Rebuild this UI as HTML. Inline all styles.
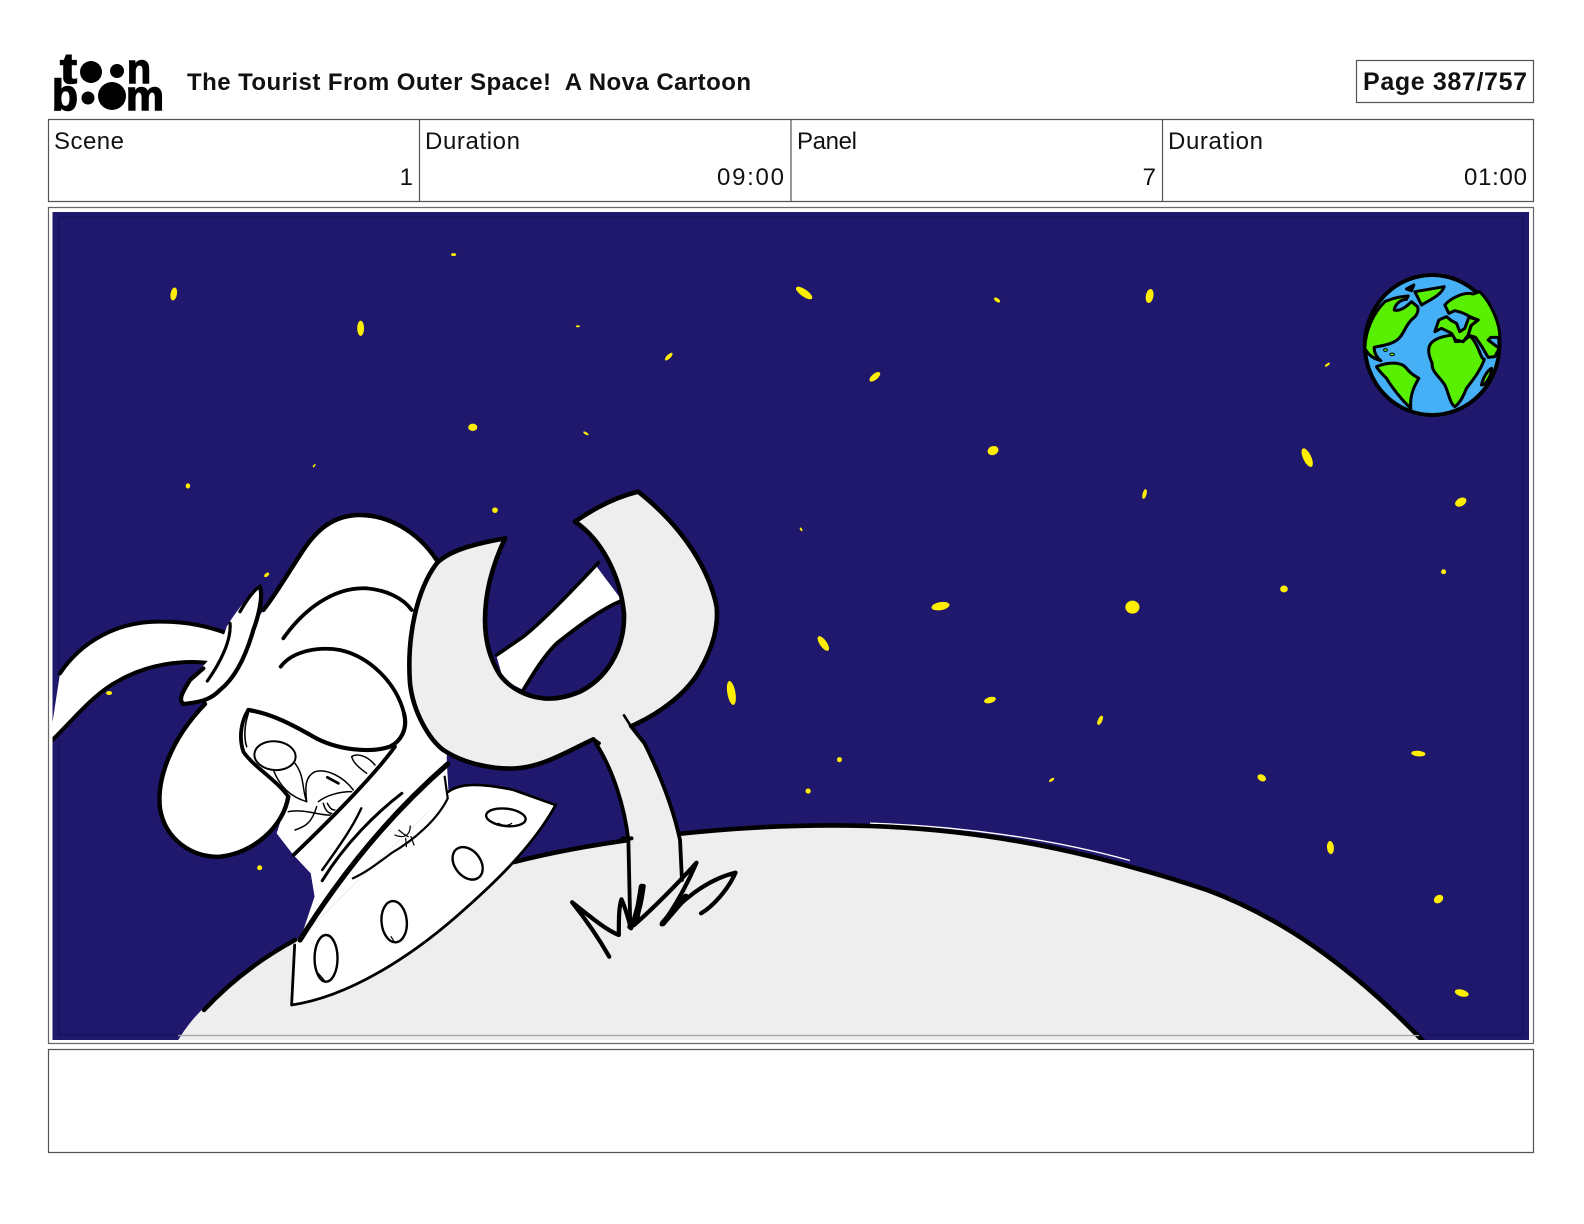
<!DOCTYPE html>
<html><head><meta charset="utf-8"><title>The Tourist From Outer Space! A Nova Cartoon</title>
<style>
html,body{margin:0;padding:0;background:#fff;width:1584px;height:1224px;overflow:hidden}
svg{display:block}
text{font-family:"Liberation Sans",sans-serif;fill:#111}
path,ellipse.s,rect,line{vector-effect:non-scaling-stroke}
.k{fill:none;stroke:#000;stroke-linecap:round;stroke-linejoin:round}
</style></head><body>
<svg width="1584" height="1224" viewBox="0 0 1584 1224" xmlns="http://www.w3.org/2000/svg">
<!-- logo -->
<g>
<text x="60" y="83" font-size="43" font-weight="700" stroke="#000" stroke-width="1.4" textLength="17" lengthAdjust="spacingAndGlyphs" style="fill:#000">t</text>
<circle cx="91" cy="72" r="11" fill="#000"/><circle cx="117" cy="71" r="7" fill="#000"/>
<text x="127" y="83" font-size="42" font-weight="700" stroke="#000" stroke-width="1.4" textLength="24" lengthAdjust="spacingAndGlyphs" style="fill:#000">n</text>
<text x="52" y="110" font-size="44" font-weight="700" stroke="#000" stroke-width="1.4" textLength="26" lengthAdjust="spacingAndGlyphs" style="fill:#000">b</text>
<circle cx="88" cy="98" r="6.5" fill="#000"/><circle cx="112" cy="96" r="14" fill="#000"/>
<text x="126" y="110" font-size="42" font-weight="700" stroke="#000" stroke-width="1.4" textLength="38" lengthAdjust="spacingAndGlyphs" style="fill:#000">m</text>
</g>
<text x="187" y="90" font-size="24" font-weight="700" textLength="564">The Tourist From Outer Space!&#160; A Nova Cartoon</text>
<rect x="1356.5" y="60.5" width="177" height="42" fill="none" stroke="#555" stroke-width="1.2"/>
<text x="1363" y="90" font-size="25" font-weight="700" textLength="164">Page 387/757</text>
<!-- table -->
<rect x="48.5" y="119.5" width="1485" height="82" fill="none" stroke="#555" stroke-width="1.2"/>
<line x1="419.5" y1="119.5" x2="419.5" y2="201.5" stroke="#555" stroke-width="1.2"/>
<line x1="791" y1="119.5" x2="791" y2="201.5" stroke="#555" stroke-width="1.2"/>
<line x1="1162.5" y1="119.5" x2="1162.5" y2="201.5" stroke="#555" stroke-width="1.2"/>
<g font-size="24">
<text x="54" y="149" textLength="70">Scene</text>
<text x="425" y="149" textLength="95">Duration</text>
<text x="797" y="149" textLength="60">Panel</text>
<text x="1168" y="149" textLength="95">Duration</text>
<text x="413" y="185" text-anchor="end">1</text>
<text x="717" y="185" textLength="67">09:00</text>
<text x="1156" y="185" text-anchor="end">7</text>
<text x="1464" y="185" textLength="63">01:00</text>
</g>
<!-- frame -->
<rect x="48.5" y="207.5" width="1485" height="836" fill="none" stroke="#666" stroke-width="1.2"/>
<rect x="48.5" y="1049.5" width="1485" height="103" fill="none" stroke="#555" stroke-width="1.2"/>
<svg x="52.5" y="212" width="1476.5" height="828" viewBox="52.5 212 1476.5 828">
<rect x="52.5" y="212" width="1476.5" height="828" fill="#1f186d"/>
<rect x="59" y="217" width="1464" height="818" fill="none" stroke="#19135a" stroke-width="1.5"/>
<!-- stars -->
<g transform="scale(1.0102)" fill="#ffee00">
<ellipse cx="172" cy="291" rx="3.2" ry="6.5" transform="rotate(10 172 291)"/>
<ellipse cx="357" cy="325" rx="3.4" ry="7.5"/>
<ellipse cx="449" cy="252" rx="2.5" ry="1.4"/>
<ellipse cx="796" cy="290" rx="9.5" ry="3.6" transform="rotate(35 796 290)"/>
<ellipse cx="987" cy="297" rx="3.5" ry="1.8" transform="rotate(35 987 297)"/>
<ellipse cx="1138" cy="293" rx="3.8" ry="7" transform="rotate(10 1138 293)"/>
<ellipse cx="572" cy="323" rx="2" ry="1"/>
<ellipse cx="662" cy="353" rx="5" ry="2" transform="rotate(-45 662 353)"/>
<ellipse cx="866" cy="373" rx="6.5" ry="3" transform="rotate(-40 866 373)"/>
<ellipse cx="468" cy="423" rx="4.5" ry="3.6"/>
<ellipse cx="580" cy="429" rx="3" ry="1.2" transform="rotate(30 580 429)"/>
<ellipse cx="983" cy="446" rx="5.5" ry="4.4" transform="rotate(-20 983 446)"/>
<ellipse cx="1294" cy="453" rx="4" ry="10" transform="rotate(-25 1294 453)"/>
<ellipse cx="1314" cy="361" rx="3" ry="1.2" transform="rotate(-35 1314 361)"/>
<ellipse cx="186" cy="481" rx="2.2" ry="2.6"/>
<ellipse cx="311" cy="461" rx="2" ry=".8" transform="rotate(-50 311 461)"/>
<ellipse cx="1133" cy="489" rx="2" ry="5" transform="rotate(15 1133 489)"/>
<ellipse cx="1446" cy="497" rx="6" ry="4" transform="rotate(-30 1446 497)"/>
<circle cx="490" cy="505" r="2.8"/>
<ellipse cx="793" cy="524" rx="2" ry="1" transform="rotate(60 793 524)"/>
<ellipse cx="264" cy="569" rx="3" ry="1.7" transform="rotate(-40 264 569)"/>
<ellipse cx="1271" cy="583" rx="3.8" ry="3.4"/>
<circle cx="1429" cy="566" r="2.5"/>
<ellipse cx="931" cy="600" rx="9" ry="4" transform="rotate(-10 931 600)"/>
<ellipse cx="1121" cy="601" rx="7" ry="6.4"/>
<ellipse cx="815" cy="637" rx="3.5" ry="8.5" transform="rotate(-35 815 637)"/>
<ellipse cx="724" cy="686" rx="4" ry="12" transform="rotate(-10 724 686)"/>
<ellipse cx="980" cy="693" rx="6" ry="3" transform="rotate(-15 980 693)"/>
<ellipse cx="1089" cy="713" rx="2.2" ry="5" transform="rotate(25 1089 713)"/>
<ellipse cx="1404" cy="746" rx="7" ry="2.8" transform="rotate(5 1404 746)"/>
<circle cx="831" cy="752" r="2.5"/>
<ellipse cx="1041" cy="772" rx="3" ry="1.4" transform="rotate(-35 1041 772)"/>
<ellipse cx="1249" cy="770" rx="4.5" ry="3.2" transform="rotate(30 1249 770)"/>
<circle cx="800" cy="783" r="2.6"/>
<ellipse cx="1317" cy="839" rx="3.4" ry="6.5" transform="rotate(-5 1317 839)"/>
<ellipse cx="1424" cy="890" rx="5" ry="3.8" transform="rotate(-35 1424 890)"/>
<ellipse cx="1447" cy="983" rx="7" ry="3.4" transform="rotate(15 1447 983)"/>
<circle cx="257" cy="859" r="2.5"/>
<ellipse cx="108" cy="686" rx="3" ry="2"/>
</g>
<!-- earth -->
<g transform="translate(1331.5 260) scale(.33333)">
<ellipse class="s" cx="302" cy="255" rx="202" ry="210" fill="#46b0f6" stroke="#000" stroke-width="4"/>
<g fill="#58f000" stroke="#000" stroke-width="3" stroke-linejoin="round">
<path d="M160,125C175,118 200,110 230,108L225,118C205,118 190,135 188,150C205,155 225,140 240,125L258,140C262,150 258,165 245,175C225,190 220,215 205,232C190,250 165,255 128,262C128,280 135,292 148,302C125,295 110,285 100,265C102,210 125,160 160,125Z"/>
<path d="M250,95L338,80C330,105 295,120 270,135Z"/>
<path d="M225,87L247,75L240,92Z"/>
<path d="M135,320C170,305 210,305 225,325C240,345 255,350 262,355C240,390 235,420 238,445C210,420 180,380 165,355C150,340 140,330 135,320Z"/>
<path d="M292,265C295,240 330,228 365,225L372,245L395,243L415,228C430,240 440,265 450,290C455,300 460,295 458,300C445,335 420,365 405,385C395,410 385,430 370,440C355,430 352,400 340,375C320,345 300,335 302,310C295,295 290,280 292,265Z"/>
<path d="M340,135C360,112 400,95 425,102L445,95C480,130 505,190 505,232L478,232L470,240L503,265L490,290L470,292L450,258L432,232L410,225L420,195L440,180L415,170C400,160 385,155 370,152L352,160Z"/>
<path d="M310,215L322,180L345,170L360,182L375,190L385,215L400,205L412,172L440,180L418,197L410,225L395,245L372,240L360,220L330,205Z"/>
<path d="M450,375C455,350 470,330 480,325C480,345 465,375 450,375Z"/>
<ellipse cx="162" cy="270" rx="6" ry="4"/><ellipse cx="182" cy="283" rx="7" ry="4"/>
</g>
</g>
<!-- planet -->
<path d="M177,1042C190,1020 204,1007 215,998C240,975 270,955 295,940L514,862C600,840 740,822 869,826C1000,830 1110,858 1207,890C1280,917 1350,965 1424,1042Z" fill="#eeeeee"/>
<path d="M870,823.2C960,826 1050,838.5 1130,860.5" fill="none" stroke="#fff" stroke-width="1.4"/>
<path class="k" d="M204,1010C230,982 262,958 295,940" stroke-width="4.4"/>
<path class="k" d="M514,862C600,840 740,822 869,826C1000,830 1110,858 1207,890C1280,917 1350,965 1424,1042" stroke-width="4.6"/>
<line x1="178" y1="1035.5" x2="1419" y2="1035.5" stroke="#a5a5a5" stroke-width="1.3"/>
<!-- tail, helmet (zoom2 coords) -->
<g transform="translate(50 480) scale(.33333)">
<path d="M7,780L7,730L30,580C90,490 200,420 340,425C410,425 480,440 530,460L500,555C400,535 290,555 210,600C130,640 70,720 7,785Z" fill="#fff"/>
<path class="k" d="M30,580C90,490 200,420 340,425C410,425 480,440 530,460" stroke-width="4"/>
<path class="k" d="M2,785C70,720 130,640 210,600C290,555 400,535 495,552" stroke-width="4"/>
<path d="M640,390C680,340 720,270 760,210C800,150 850,105 930,105C1010,105 1100,150 1160,240L1300,300L1200,700L1190,835L1193,956L815,1200L730,1125L680,1060L715,950C700,1040 610,1120 510,1130C430,1135 345,1080 330,985C320,900 360,780 465,672Z" fill="#fff"/>
<path class="k" d="M640,390C680,340 720,270 760,210C800,150 850,105 930,105C1010,105 1100,150 1160,240" stroke-width="4.4"/>
<path class="k" d="M700,475C760,390 850,320 950,325C1010,330 1060,355 1085,390" stroke-width="3.8"/>
<path class="k" d="M692,560C730,510 810,500 870,510C960,530 1040,610 1062,700" stroke-width="3.8"/>
<path class="k" d="M595,690C660,700 720,730 790,770C860,810 960,820 1020,800C1050,785 1075,750 1062,700" stroke-width="4.2"/>
<path class="k" d="M595,690C575,720 565,770 580,815C610,860 680,900 715,950" stroke-width="3.8"/>
<path class="k" d="M595,700C585,730 580,770 590,800" stroke-width="1.6"/>
<path class="k" d="M465,672C360,780 320,900 330,985C345,1080 430,1135 510,1130C610,1120 700,1040 715,950" stroke-width="4.4"/>
<path d="M630,320C590,350 555,400 530,440C510,510 470,550 440,575C410,610 385,650 395,665C420,675 470,670 510,630C570,560 610,450 635,370Z" fill="#fff"/>
<path class="k" d="M540,430C545,480 510,550 472,603" stroke-width="3.2"/>
<path class="k" d="M630,320C640,350 625,410 610,450C590,520 560,590 510,630C490,650 470,665 400,672C385,660 395,640 420,600L460,565" stroke-width="4.2"/>
<path class="k" d="M630,320C610,330 590,360 570,395" stroke-width="3.4"/>
</g>
<!-- face (zoom7 coords) -->
<g transform="translate(230 720) scale(.33333)">
<ellipse class="s" cx="135" cy="107" rx="62" ry="43" fill="#fff" stroke="#000" stroke-width="2" transform="rotate(5 135 107)"/>
<g class="k" stroke-width="1.5" fill="none" stroke="#000">
<path d="M130,150C150,200 180,230 230,245"/>
<path d="M195,130C225,170 215,205 230,245C225,200 225,170 255,155C290,145 340,170 370,210"/>
<path d="M175,275C220,265 280,290 305,285"/>
<path d="M195,330C225,320 245,310 260,260"/>
<path d="M265,245C290,225 330,215 365,215"/>
<path d="M280,250C285,270 295,280 305,280M292,250C300,265 305,270 315,270"/>
<path d="M365,110C380,100 410,105 435,135M365,110C370,130 390,145 410,160"/>
<path d="M495,345C520,350 540,345 545,320M510,325C520,335 530,345 540,350M520,355L525,380M535,350L552,375"/>
</g>
<path class="k" d="M292,172L325,190" stroke-width="2.8"/>
</g>
<!-- collar + saucer (zoom4 coords, non-uniform) -->
<g transform="translate(150 740) scale(.38270 .33333)">
<path d="M375,345L420,400L430,470L395,590L780,155L775,55L640,20Z" fill="#fff"/>
<path d="M780,155C800,135 850,130 950,150L1060,195C1000,320 900,430 800,530C680,650 520,770 370,795L375,620L395,590Z" fill="#fff"/>
<path class="k" d="M1060,195L950,150C860,128 810,130 780,155" stroke-width="2.6"/>
<path class="k" d="M1060,195C1000,320 900,430 800,530C680,650 520,770 370,795L378,615" stroke-width="2.8"/>
<path class="k" d="M640,20C590,100 480,230 375,345" stroke-width="3.8"/>
<path class="k" d="M778,72C650,200 520,365 392,600" stroke-width="5.2"/>
<path class="k" d="M658,160C590,220 510,310 450,422" stroke-width="3"/>
<path class="k" d="M552,205C530,260 500,310 450,390" stroke-width="2.4"/>
<path class="k" d="M770,110L778,175C750,240 690,300 630,340C590,375 560,400 530,415" stroke-width="2.2"/>
<g fill="none" stroke="#000" stroke-width="2.4">
<ellipse class="s" cx="930" cy="232" rx="52" ry="26" transform="rotate(8 930 232)"/>
<ellipse class="s" cx="830" cy="370" rx="35" ry="52" transform="rotate(-28 830 370)"/>
<ellipse class="s" cx="638" cy="545" rx="33" ry="62" transform="rotate(-4 638 545)"/>
<ellipse class="s" cx="460" cy="655" rx="30" ry="70"/>
</g>
<g class="k" stroke-width="1.2" fill="none">
<path d="M910,250C925,258 935,258 945,250"/><path d="M630,590L640,608"/><path d="M440,700L455,720"/>
<path d="M640,285C660,295 680,290 680,258M650,270C660,280 668,288 675,290M668,295L670,320M682,290L690,315"/>
</g>
<!-- leg -->
<path d="M1150,-20L1250,-40L1290,5C1340,120 1370,220 1385,300L1390,420L1255,560L1250,300C1240,200 1210,90 1150,-20Z" fill="#eeeeee"/>
<path class="k" d="M1165,10C1210,90 1240,200 1250,300L1255,560" stroke-width="3.8"/>
<path class="k" d="M1290,5C1340,120 1370,220 1385,300L1390,420" stroke-width="3.8"/>
<path class="k" d="M1235,295L1258,295" stroke-width="4"/>
<!-- grass -->
<path class="k" d="M1200,650C1175,600 1140,540 1103,487C1140,520 1190,570 1225,585C1225,540 1225,500 1232,478C1245,510 1250,540 1257,565C1270,520 1280,470 1290,438C1285,480 1280,510 1265,555C1310,510 1380,430 1428,368C1405,430 1370,505 1337,553C1380,490 1450,420 1530,398C1510,450 1470,500 1440,520" stroke-width="4.2"/>
<path class="k" d="M1255,560L1270,545L1285,440" stroke-width="6"/>
<path class="k" d="M1340,550L1400,470" stroke-width="6"/>
</g>
<!-- bar + U (zoom3 coords) -->
<g transform="translate(400 480) scale(.33333)">
<path d="M290,530L370,470C420,430 500,350 590,260L665,360C600,390 540,435 470,490C430,530 400,580 370,630L310,600Z" fill="#fff"/>
<path class="k" d="M290,525L370,470C420,430 500,350 595,248" stroke-width="3.6"/>
<path class="k" d="M665,362C600,390 540,435 470,490C430,530 400,580 370,630" stroke-width="3.8"/>
<path d="M580,778L692,738L731,787L600,787Z" fill="#eeeeee"/>
<path d="M315,175C230,190 150,210 110,250C50,330 20,470 30,610C40,700 90,780 130,810C190,850 280,870 350,865C430,860 510,810 580,778L695,738C780,700 860,640 900,570C940,500 955,440 950,380C930,280 860,150 715,35C650,50 590,80 525,125C600,175 660,280 672,400C675,520 610,600 540,635C500,652 460,658 430,655C380,650 330,625 300,585C265,530 255,470 255,420C255,340 275,260 315,175Z" fill="#eeeeee"/>
<path class="k" d="M315,175C230,190 150,210 110,250C50,330 20,470 30,610C40,700 90,780 130,810C190,850 280,870 350,865C430,860 510,810 580,778" stroke-width="4.6"/>
<path class="k" d="M695,738C780,700 860,640 900,570C940,500 955,440 950,380C930,280 860,150 715,35C650,50 590,80 525,125C600,175 660,280 672,400C675,520 610,600 540,635C500,652 460,658 430,655C380,650 330,625 300,585C265,530 255,470 255,420C255,340 275,260 315,175" stroke-width="4.6"/>
<path class="k" d="M672,706L692,738" stroke-width="2.6"/>
<path class="k" d="M692,738L731,787" stroke-width="3.8"/>
<path class="k" d="M580,778L597,790" stroke-width="3.8"/>
</g>
</svg>
</svg>
</body></html>
